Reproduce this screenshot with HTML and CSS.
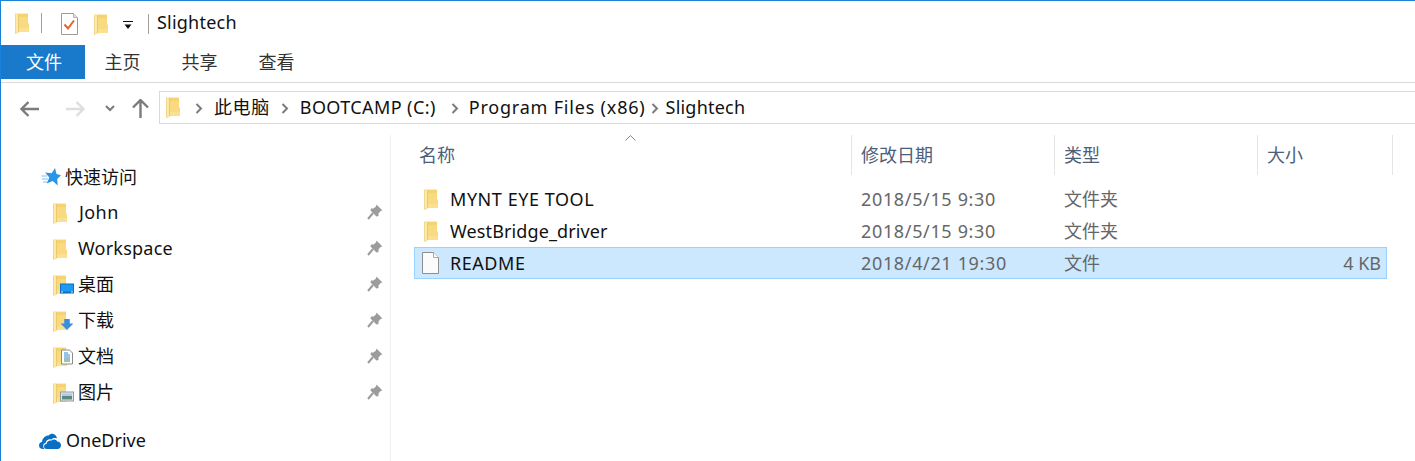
FILE: index.html
```html
<!DOCTYPE html>
<html>
<head>
<meta charset="utf-8">
<title>Slightech</title>
<link rel="stylesheet" href="styles.css">
</head>
<body>
<svg class="defs" width="0" height="0">
  <symbol id="folder" viewBox="0 0 14 21">
    <path d="M0 0.5H13V10.5H14V19H4V19.5L0.6 21H0Z" fill="#f9da80"/>
    <path d="M3.5 1V19" stroke="#ecc96e" stroke-width="1"/>
    <path d="M0 0.5H3V19.3L0.6 21H0Z" fill="#fce9a8"/>
    <path d="M4 1H13V4H4Z" fill="#f6d372"/>
    <path d="M4 15H14V19H4Z" fill="#fbe08f"/>
    <path d="M0.5 1V20.5" stroke="#f2d88f" stroke-width="1"/>
  </symbol>
  <symbol id="pin" viewBox="0 0 16 16">
    <path d="M9.5 0.5L15.5 6.5L13.5 7L11.5 9.5L11.5 12L9.5 12.5L3.5 6.5L4 4.5L6.5 4.5L9 2.5Z" fill="#9c9c9c"/>
    <path d="M6 9L1 15" stroke="#9c9c9c" stroke-width="2"/>
  </symbol>
</svg>

<div class="window">
  <div class="titlebar">
    <svg class="ico-folder"><use href="#folder"/></svg>
    <span class="tsep sep-a"></span>
    <svg class="ico-check" viewBox="0 0 17 22">
      <path d="M0.5 0.5H12.5L16.5 4.5V21.5H0.5Z" fill="#fff" stroke="#9a9a9a"/>
      <path d="M12.5 0.5V4.5H16.5" fill="#e6e6e6" stroke="#b5b5b5"/>
      <path d="M3.5 11.5L7 15.5L13 7.5" fill="none" stroke="#e8602c" stroke-width="2"/>
    </svg>
    <svg class="ico-folder folder-b"><use href="#folder"/></svg>
    <svg class="ico-drop" viewBox="0 0 10 9">
      <path d="M0 0.5H10" stroke="#111" stroke-width="1"/>
      <path d="M1.5 3.5H8.5L5 8Z" fill="#111"/>
    </svg>
    <span class="tsep sep-b"></span>
    <span class="title">Slightech</span>
  </div>

  <div class="ribbon">
    <div class="tab tab-file">文件</div>
    <div class="tab">主页</div>
    <div class="tab">共享</div>
    <div class="tab">查看</div>
  </div>

  <div class="navbar">
    <svg class="nav-back" viewBox="0 0 19 16"><path d="M8.5 1L1.5 8L8.5 15M2 8H19" fill="none" stroke="#7b7b7b" stroke-width="2.4"/></svg>
    <svg class="nav-fwd" viewBox="0 0 19 16"><path d="M10.5 1L17.5 8L10.5 15M17 8H0" fill="none" stroke="#dedede" stroke-width="2.4"/></svg>
    <svg class="nav-down" viewBox="0 0 10 7"><path d="M1 1L5 5L9 1" fill="none" stroke="#7b7b7b" stroke-width="2"/></svg>
    <svg class="nav-up" viewBox="0 0 17 19"><path d="M1 8.5L8.5 1L16 8.5M8.5 2V19" fill="none" stroke="#7b7b7b" stroke-width="2.4"/></svg>
    <div class="address">
      <svg class="ico-folder"><use href="#folder"/></svg>
      <svg class="crumb-sep first" viewBox="0 0 8 11"><path d="M1.5 1L6 5.5L1.5 10" fill="none" stroke="#7b7b7b" stroke-width="2"/></svg>
      <span class="crumb sp-pc">此电脑</span>
      <svg class="crumb-sep" viewBox="0 0 8 11"><path d="M1.5 1L6 5.5L1.5 10" fill="none" stroke="#7b7b7b" stroke-width="2"/></svg>
      <span class="crumb sp-boot">BOOTCAMP (C:)</span>
      <svg class="crumb-sep sep-wide" viewBox="0 0 8 11"><path d="M1.5 1L6 5.5L1.5 10" fill="none" stroke="#7b7b7b" stroke-width="2"/></svg>
      <span class="crumb sp-prog">Program Files (x86)</span>
      <svg class="crumb-sep sep-tight" viewBox="0 0 8 11"><path d="M1.5 1L6 5.5L1.5 10" fill="none" stroke="#7b7b7b" stroke-width="2"/></svg>
      <span class="crumb sp-slight">Slightech</span>
    </div>
  </div>

  <div class="main">
    <div class="sidebar">
      <div class="side-head side-quick">
        <svg class="ico-star" viewBox="0 0 20 18">
          <path d="M14 0L15.5 6.1L20 7.2L16.2 11L16.7 17.5L11.8 13.1L5.7 15.6L8.3 9.6L4.1 4.5L10.7 5.2Z" fill="#2a94e6"/>
          <path d="M0.5 8H6M1 11H7M2 14H6" stroke="#7fc0f0" stroke-width="1"/>
        </svg>
        <span>快速访问</span>
      </div>
      <div class="side-item">
        <svg class="ico-folder"><use href="#folder"/></svg>
        <span class="side-label sp-john">John</span>
        <svg class="ico-pin"><use href="#pin"/></svg>
      </div>
      <div class="side-item">
        <svg class="ico-folder"><use href="#folder"/></svg>
        <span class="side-label sp-slight">Workspace</span>
        <svg class="ico-pin"><use href="#pin"/></svg>
      </div>
      <div class="side-item">
        <svg class="ico-folder"><use href="#folder"/></svg>
        <svg class="badge" viewBox="0 0 14 10">
          <rect x="0" y="0" width="14" height="10" fill="#0d6fc0"/>
          <rect x="1" y="1" width="12" height="7" fill="#1e9bf0"/>
          <path d="M1 8.5H3M11 8.5H13" stroke="#cfe8fa"/>
        </svg>
        <span class="side-label">桌面</span>
        <svg class="ico-pin"><use href="#pin"/></svg>
      </div>
      <div class="side-item">
        <svg class="ico-folder"><use href="#folder"/></svg>
        <svg class="badge" viewBox="0 0 14 12">
          <path d="M4 0H10V5H14L7 12L0 5H4Z" fill="#3a8fdc"/>
        </svg>
        <span class="side-label">下载</span>
        <svg class="ico-pin"><use href="#pin"/></svg>
      </div>
      <div class="side-item">
        <svg class="ico-folder"><use href="#folder"/></svg>
        <svg class="badge badge-doc" viewBox="0 0 12 15">
          <path d="M0.5 0.5H8.5L11.5 3.5V14.5H0.5Z" fill="#fff" stroke="#8a8a8a"/>
          <path d="M3 3.5H7M3 5.5H9M3 7.5H9" stroke="#2f86d8"/>
          <path d="M3 9.5H9M3 11.5H9" stroke="#3d7f76"/>
        </svg>
        <span class="side-label">文档</span>
        <svg class="ico-pin"><use href="#pin"/></svg>
      </div>
      <div class="side-item">
        <svg class="ico-folder"><use href="#folder"/></svg>
        <svg class="badge" viewBox="0 0 14 10">
          <rect x="0.5" y="0.5" width="13" height="9" fill="#dfe7ee" stroke="#999"/>
          <path d="M2 4H12V8H2Z" fill="#5c8a80"/>
          <path d="M2 2H12V4.5H2Z" fill="#a9cdea"/>
        </svg>
        <span class="side-label">图片</span>
        <svg class="ico-pin"><use href="#pin"/></svg>
      </div>
      <div class="side-head side-cloud">
        <svg class="ico-cloud" viewBox="0 0 22 16">
          <path d="M4 16C1.5 16 0 14.4 0 12.4C0 10.6 1.2 9.2 3 9C3.4 5 6.5 2.5 9.5 2.5C11 1 13 0.5 14.5 1C16.5 1.6 17.8 3.5 18 5.5C16.5 4.8 14 5 12.5 6.5C10 5.5 7 7 6.5 10C5.5 10 4 11 4.2 13C4.2 14 4.5 15.2 5.5 16Z" fill="#0a6fc2"/>
          <path d="M7.5 16C6 16 5 15 5 13.5C5 12 6 11 7.5 11C7.8 8.5 10 7 12.5 7.5C14 6 17 6 18.2 8.5C20.3 8.5 22 10 22 12.2C22 14.4 20.6 16 18.5 16Z" fill="#0a6fc2"/>
        </svg>
        <span>OneDrive</span>
      </div>
    </div>

    <div class="files">
      <div class="sort-caret">
        <svg viewBox="0 0 11 6" width="11" height="6"><path d="M0.5 5.5L5.5 0.5L10.5 5.5" fill="none" stroke="#888"/></svg>
      </div>
      <div class="col-head">
        <div class="hcell">名称</div>
        <div class="hcell">修改日期</div>
        <div class="hcell">类型</div>
        <div class="hcell">大小</div>
      </div>
      <div class="row">
        <div class="name"><svg class="ico-folder"><use href="#folder"/></svg><span class="sp-mynt">MYNT EYE TOOL</span></div>
        <div class="cell date">2018/5/15 9:30</div>
        <div class="cell">文件夹</div>
        <div class="cell size"></div>
      </div>
      <div class="row">
        <div class="name"><svg class="ico-folder"><use href="#folder"/></svg><span class="sp-west">WestBridge_driver</span></div>
        <div class="cell date">2018/5/15 9:30</div>
        <div class="cell">文件夹</div>
        <div class="cell size"></div>
      </div>
      <div class="row selected">
        <div class="name">
          <svg class="ico-file" viewBox="0 0 17 22">
            <path d="M0.5 0.5H11.5L16.5 5.5V21.5H0.5Z" fill="#fbfbfb" stroke="#8f8f8f"/>
            <path d="M11.5 0.5V5.5H16.5" fill="#fff" stroke="#a8a8a8"/>
          </svg>
          <span class="sp-mynt">README</span>
        </div>
        <div class="cell date">2018/4/21 19:30</div>
        <div class="cell">文件</div>
        <div class="cell size">4 KB</div>
      </div>
    </div>
  </div>
</div>
</body>
</html>
```

FILE: styles.css
```css
html, body { margin: 0; padding: 0; background: #fff; }
body {
  width: 1415px; height: 461px; overflow: hidden;
  color: #111;
  font-family: "Noto Sans", "Noto Sans CJK SC", sans-serif;
  font-size: 18px; line-height: 24px;
}
svg { display: block; flex: none; }
.defs { position: absolute; }
.window { border-top: 1px solid #1a82d8; border-left: 1px solid #1a82d8; height: 460px; }

.ico-folder { width: 14px; height: 21px; }

/* widths of the latin text run a bit wider on the original */
.sp-pc { letter-spacing: .6px; }
.sp-boot { letter-spacing: .4px; }
.sp-prog { letter-spacing: .8px; }
.sp-slight { letter-spacing: .22px; }
.sp-john { letter-spacing: .4px; text-indent: 1px; }
.sp-mynt { letter-spacing: .55px; }
.sp-west { letter-spacing: .12px; }
.date { letter-spacing: .65px; }

/* title bar */
.titlebar { display: flex; align-items: center; height: 44px; padding-left: 14px; box-sizing: border-box; }
.tsep { width: 1px; height: 20px; background: #a0a0a0; }
.sep-a { margin-left: 12px; }
.ico-check { width: 17px; height: 22px; margin-left: 19px; margin-top: 1px; }
.folder-b { margin-left: 16px; margin-top: 3px; }
.ico-drop { width: 10px; height: 9px; margin-left: 15px; margin-top: 5px; }
.sep-b { margin-left: 15px; margin-top: 2px; }
.title { margin-left: 8px; margin-top: -2px; letter-spacing: .22px; }

/* ribbon */
.ribbon { display: flex; height: 34px; border-bottom: 1px solid #d9d9d9; padding-bottom: 3px; }
.tab { width: 77px; text-align: center; line-height: 35px; color: #333; }
.tab-file { width: 84px; margin-right: -1px; padding-left: 2px; box-sizing: border-box; background: #1979ca; color: #fff; }

/* nav and address */
.navbar { display: flex; align-items: center; height: 33px; margin-top: 8px; border-bottom: 1px solid transparent; }
.nav-back { width: 19px; height: 16px; margin-left: 19px; margin-top: 2px; }
.nav-fwd { width: 19px; height: 16px; margin-left: 27px; margin-top: 2px; }
.nav-down { width: 10px; height: 7px; margin-left: 20px; margin-top: 2px; }
.nav-up { width: 17px; height: 19px; margin-left: 17px; margin-top: 2px; }
.address {
  display: flex; align-items: center; gap: 11px; flex: 1;
  height: 33px; box-sizing: border-box; margin-left: 10px; padding-left: 6px;
  border: 1px solid #d9d9d9; border-right: none;
  white-space: nowrap;
}
.crumb { margin-top: -2px; }
.crumb-sep { width: 8px; height: 11px; margin-top: 2px; }
.crumb-sep.first { margin-left: 4px; }
.crumb-sep.sep-wide { margin-left: 4px; margin-right: -1px; }
.crumb-sep.sep-tight { margin-left: -6px; margin-right: -4px; }

/* main area */
.main { display: flex; height: 337px; margin-top: 10px; }
.sidebar { width: 389px; height: 327px; border-right: 1px solid #f0f0f0; flex: none; }
.side-head { display: flex; align-items: center; height: 36px; padding-left: 40px; }
.side-head span { margin-left: 5px; }
.side-quick { height: 35px; margin-top: 25px; }
.side-quick span { margin-top: -2px; margin-left: 4px; }
.ico-star { width: 20px; height: 18px; margin-top: -1px; }
.side-item { position: relative; display: flex; align-items: center; height: 36px; padding-left: 52px; }
.side-label { margin-left: 11px; flex: 1; margin-top: -2px; }
.ico-pin { width: 16px; height: 16px; margin-right: 7px; margin-top: -2px; }
.badge { position: absolute; left: 59px; top: 16px; width: 14px; height: 11px; }
.badge-doc { top: 10px; left: 60px; width: 12px; height: 16px; }
.side-cloud { padding-left: 38px; margin-top: 12px; }
.side-cloud span { margin-top: -2px; }
.ico-cloud { width: 22px; height: 16px; }

/* file list */
.files { position: relative; padding-left: 23px; flex: 1; }
.sort-caret { position: absolute; left: 234px; top: 0; }
.col-head { display: grid; grid-template-columns: 437px 203px 203px 135px; height: 40px; }
.hcell { padding-left: 5px; line-height: 40px; color: #4c607a; border-right: 1px solid #e5e5e5; box-sizing: border-box; margin-right: -1px; }
.hcell + .hcell { padding-left: 10px; }
.row {
  display: grid; grid-template-columns: 437px 203px 203px 128px;
  width: 973px;
  height: 32px; box-sizing: border-box; align-items: center; border: 1px solid transparent;
  color: #666;
}
.col-head + .row { margin-top: 8px; }
.selected { background: #cce8ff; border-color: #99d1ff; }
.name { display: flex; align-items: center; padding-left: 9px; color: #111; }
.name span { margin-left: 12px; }
.row .ico-file { width: 17px; height: 22px; margin-left: -2px; margin-right: -1px; }
.cell { padding-left: 9px; }
.size { text-align: right; padding: 0 5px 0 0; }
```
